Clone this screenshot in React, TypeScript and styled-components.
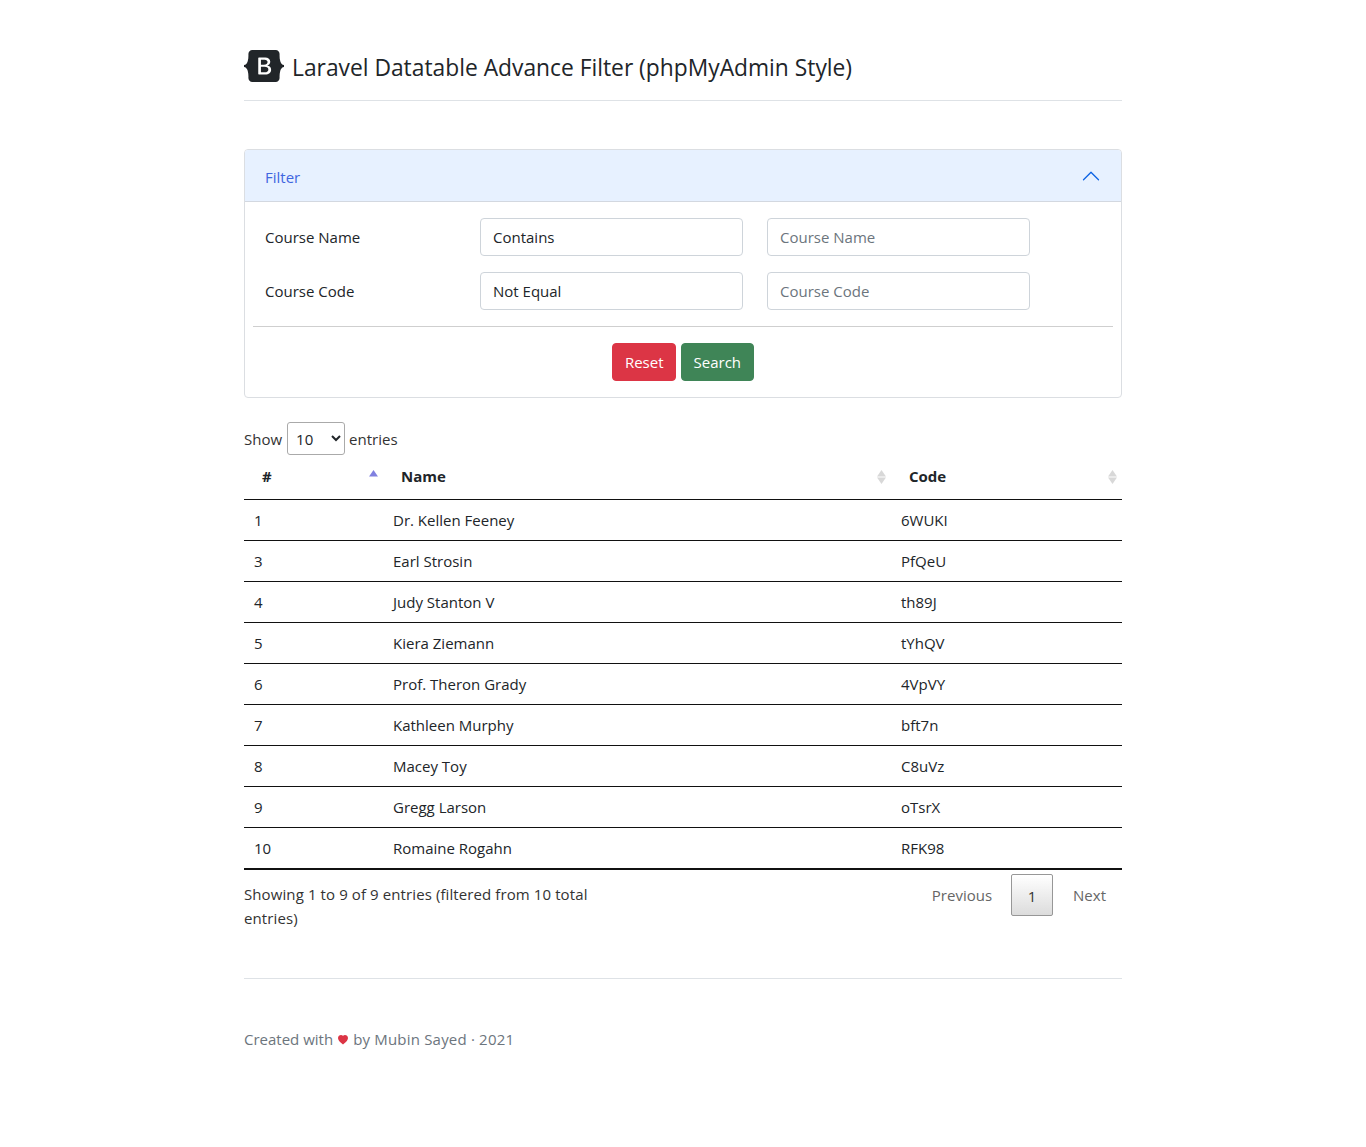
import * as React from 'react';

import styled, { createGlobalStyle } from 'styled-components';

const GlobalStyle = createGlobalStyle`
  * {
    box-sizing: border-box;
  }
  body {
    margin: 0;
    background: #fff;
    color: #212529;
    font-family: "Open Sans", "Liberation Sans", sans-serif;
    font-size: 15px;
    line-height: 24px;
  }
`;

const Page = styled.div`
  width: 878px;
  margin-left: 244px;
  padding-top: 48px;
`;

const Header = styled.header`
  display: flex;
  align-items: center;
  height: 53px;
  padding-bottom: 17px;
  border-bottom: 1px solid #dee2e6;
  margin-bottom: 48px;
`;

const Logo = styled.svg`
  width: 40px;
  height: 32px;
  margin-right: 8px;
  fill: #212529;
`;

const Title = styled.span`
  margin-top: 4px;
  font-size: 22.8px;
`;

const Accordion = styled.section`
  border: 1px solid #dbdee2;
  border-radius: 4px;
  margin-bottom: 24px;
`;

const AccordionHeader = styled.div`
  display: flex;
  align-items: center;
  justify-content: space-between;
  height: 52px;
  padding: 0 20px;
  background: #e7f1ff;
  color: #3f66e0;
  border-bottom: 1px solid #d3d8e0;
  border-radius: 3px 3px 0 0;
`;

const HeaderLabel = styled.span`
  margin-top: 2px;
`;

const Chevron = styled.svg`
  width: 20px;
  height: 20px;
  fill: #0c63e4;
`;

const AccordionBody = styled.div`
  padding: 16px 8px;
`;

const FilterRow = styled.div`
  display: grid;
  grid-template-columns: 191px 263px 263px;
  column-gap: 24px;
  align-items: center;
  padding-left: 12px;
  margin-bottom: 16px;
`;

const Field = styled.input`
  width: 100%;
  height: 38px;
  padding: 6px 12px;
  border: 1px solid #ced4da;
  border-radius: 4px;
  font: inherit;
  color: #212529;

  &::placeholder {
    color: #6c757d;
    opacity: 1;
  }
`;

const Divider = styled.hr`
  margin: 0 0 16px;
  border: 0;
  border-top: 1px solid #cfcfcf;
`;

const Buttons = styled.div`
  display: flex;
  justify-content: center;
  gap: 5px;
`;

const Button = styled.button<{ $tone: string }>`
  height: 38px;
  padding: 0 11.5px;
  border: 1px solid ${(p) => p.$tone};
  border-radius: 4px;
  background: ${(p) => p.$tone};
  color: #fff;
  font: inherit;
`;

const LengthRow = styled.div`
  display: flex;
  align-items: center;
  gap: 5px;
  height: 33px;
  color: #333;
`;

const LengthSelect = styled.select`
  width: 58px;
  height: 33px;
  margin-right: -1px;
  padding: 5px 4px;
  border: 1px solid #aaa;
  border-radius: 3px;
  background: #fff;
  color: #212529;
  font: inherit;
`;

const Table = styled.table`
  width: 100%;
  margin-top: 1px;
  border-collapse: separate;
  border-spacing: 0;
  table-layout: fixed;
  border-bottom: 1px solid #111;
`;

const HeadCell = styled.th<{ $w?: number }>`
  position: relative;
  width: ${(p) => (p.$w ? `${p.$w}px` : 'auto')};
  height: 44px;
  padding: 8px 18px 11px;
  border-bottom: 1px solid #111;
  text-align: left;
  font-weight: 700;
  color: #212529;
`;

const SortIcon = styled.svg`
  position: absolute;
  top: 14px;
  right: 5px;
  width: 9px;
  height: 14px;
`;

const BodyRow = styled.tr`
  td {
    border-bottom: 1px solid #111;
  }
`;

const BodyCell = styled.td`
  height: 41px;
  padding: 8px 10px;
`;

const TableFooter = styled.div`
  display: flex;
  justify-content: space-between;
  margin-bottom: 48px;
`;

const Info = styled.div`
  width: 360px;
  padding-top: 12px;
  color: #333;
  letter-spacing: 0.1px;
`;

const Paginate = styled.nav`
  display: flex;
  align-items: flex-start;
  padding-top: 4px;
`;

const PageLink = styled.span`
  height: 42px;
  padding: 9px 16px;
  margin-left: 4px;
  color: #666;
`;

const CurrentPage = styled(PageLink)`
  width: 42px;
  margin-left: 3px;
  padding: 9px 0;
  text-align: center;
  color: #333;
  border: 1px solid #979797;
  border-radius: 2px;
  background: linear-gradient(to bottom, #fff 0%, #dcdcdc 100%);
`;

const Footer = styled.footer`
  padding-top: 48px;
  border-top: 1px solid #dee2e6;
  color: #6c757d;
`;

const Heart = styled.svg`
  width: 10px;
  height: 10px;
  margin: 0 5px;
  fill: #dc3545;
  vertical-align: 0;
`;

const Credit = styled.span`
  letter-spacing: 0.19px;
`;

const courses = [
  { id: 1, name: 'Dr. Kellen Feeney', code: '6WUKI' },
  { id: 3, name: 'Earl Strosin', code: 'PfQeU' },
  { id: 4, name: 'Judy Stanton V', code: 'th89J' },
  { id: 5, name: 'Kiera Ziemann', code: 'tYhQV' },
  { id: 6, name: 'Prof. Theron Grady', code: '4VpVY' },
  { id: 7, name: 'Kathleen Murphy', code: 'bft7n' },
  { id: 8, name: 'Macey Toy', code: 'C8uVz' },
  { id: 9, name: 'Gregg Larson', code: 'oTsrX' },
  { id: 10, name: 'Romaine Rogahn', code: 'RFK98' },
];

const Sort = ({ asc }: { asc?: boolean }) => (
  <SortIcon viewBox="0 0 9 14">
    <path d="M4.5 0 L9 6.5 L0 6.5 Z" fill={asc ? '#8080e0' : '#d8d8d8'} />
    {!asc && <path d="M4.5 14 L9 7.5 L0 7.5 Z" fill="#d8d8d8" />}
  </SortIcon>
);

export default function App() {
  return (
    <Page>
      <GlobalStyle />
      <Header>
        <Logo viewBox="0 0 118 94">
          <path
            fillRule="evenodd"
            d="M24.509 0c-6.733 0-11.715 5.893-11.492 12.284.214 6.14-.064 14.092-2.066 20.577C8.943 39.365 5.547 43.485 0 44.014v5.972c5.547.529 8.943 4.649 10.951 11.153 2.002 6.485 2.28 14.437 2.066 20.577C12.794 88.106 17.776 94 24.51 94H93.5c6.733 0 11.714-5.893 11.491-12.284-.214-6.14.064-14.092 2.066-20.577 2.009-6.504 5.396-10.624 10.943-11.153v-5.972c-5.547-.529-8.934-4.649-10.943-11.153-2.002-6.484-2.28-14.437-2.066-20.577C105.214 5.894 100.233 0 93.5 0H24.508zM80 57.863C80 66.663 73.436 72 62.543 72H44a2 2 0 01-2-2V24a2 2 0 012-2h18.437c9.083 0 15.044 4.92 15.044 12.474 0 5.302-4.01 10.049-9.119 10.88v.277C75.317 46.394 80 51.21 80 57.863zM60.521 28.34H49.948v14.934h8.905c6.884 0 10.68-2.772 10.68-7.727 0-4.643-3.264-7.207-9.012-7.207zM49.948 49.2v16.458H60.91c7.167 0 10.964-2.876 10.964-8.281 0-5.406-3.903-8.178-11.425-8.178H49.948z"
          />
        </Logo>
        <Title>Laravel Datatable Advance Filter (phpMyAdmin Style)</Title>
      </Header>

      <Accordion>
        <AccordionHeader>
          <HeaderLabel>Filter</HeaderLabel>
          <Chevron viewBox="0 0 16 16">
            <path
              fillRule="evenodd"
              d="M1.646 11.354a.5.5 0 0 0 .708 0L8 5.707l5.646 5.647a.5.5 0 0 0 .708-.708l-6-6a.5.5 0 0 0-.708 0l-6 6a.5.5 0 0 0 0 .708z"
            />
          </Chevron>
        </AccordionHeader>
        <AccordionBody>
          <FilterRow>
            <span>Course Name</span>
            <Field defaultValue="Contains" />
            <Field placeholder="Course Name" />
          </FilterRow>
          <FilterRow>
            <span>Course Code</span>
            <Field defaultValue="Not Equal" />
            <Field placeholder="Course Code" />
          </FilterRow>
          <Divider />
          <Buttons>
            <Button $tone="#dc3545">Reset</Button>
            <Button $tone="#3f8557">Search</Button>
          </Buttons>
        </AccordionBody>
      </Accordion>

      <LengthRow>
        Show
        <LengthSelect defaultValue="10">
          <option value="10">10</option>
          <option value="25">25</option>
          <option value="50">50</option>
        </LengthSelect>
        entries
      </LengthRow>

      <Table>
        <thead>
          <tr>
            <HeadCell $w={139}>
              #
              <Sort asc />
            </HeadCell>
            <HeadCell $w={508}>
              Name
              <Sort />
            </HeadCell>
            <HeadCell>
              Code
              <Sort />
            </HeadCell>
          </tr>
        </thead>
        <tbody>
          {courses.map((course) => (
            <BodyRow key={course.id}>
              <BodyCell>{course.id}</BodyCell>
              <BodyCell>{course.name}</BodyCell>
              <BodyCell>{course.code}</BodyCell>
            </BodyRow>
          ))}
        </tbody>
      </Table>

      <TableFooter>
        <Info>Showing 1 to 9 of 9 entries (filtered from 10 total entries)</Info>
        <Paginate>
          <PageLink>Previous</PageLink>
          <CurrentPage>1</CurrentPage>
          <PageLink>Next</PageLink>
        </Paginate>
      </TableFooter>

      <Footer>
        Created with
        <Heart viewBox="0 0 16 16">
          <path d="M8 15C-7.333 4.868 3.279-3.04 7.824 1.143c.06.055.119.112.176.171a3.12 3.12 0 0 1 .176-.17C12.72-3.042 23.333 4.867 8 15z" />
        </Heart>
        <Credit>by Mubin Sayed · 2021</Credit>
      </Footer>
    </Page>
  );
}
